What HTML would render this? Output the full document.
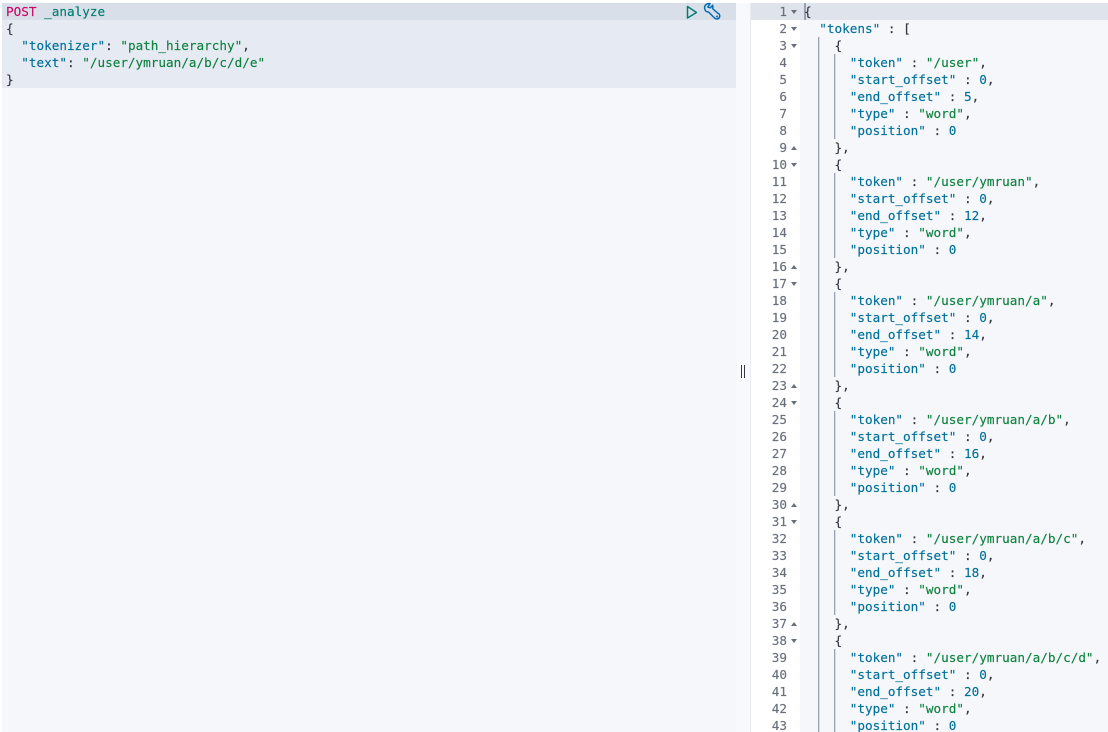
<!DOCTYPE html>
<html><head><meta charset="utf-8"><style>
html,body{margin:0;padding:0;width:1108px;height:732px;overflow:hidden;background:#fff}
.a{position:absolute}
pre{position:absolute;margin:0;font:12.67px/17px "DejaVu Sans Mono","Liberation Mono",monospace;color:#343741;-webkit-text-stroke:.15px currentColor}
.k{color:#00709a}.s{color:#0f8240}.n{color:#00709a}.m{color:#c80a68}
.d,.p{position:absolute;left:791px;width:0;height:0;border-left:3px solid transparent;border-right:3px solid transparent}
.d{border-top:4px solid #69707d}.p{border-bottom:4px solid #69707d}
.g{position:absolute;width:2px;background:linear-gradient(90deg,#98a1b6 50%,#d8dce6 50%)}
</style></head><body>
<div class="a" style="left:0;top:0;width:1108px;height:732px;overflow:hidden">
<div class="a" style="left:2px;top:3px;width:734px;height:729px;background:#f5f7fa"></div>
<div class="a" style="left:2px;top:3px;width:734px;height:85px;background:#e6eaf2"></div>
<div class="a" style="left:2px;top:3px;width:734px;height:17px;background:#d9dfe8"></div>
<div class="a" style="left:736px;top:3px;width:15px;height:729px;background:#f8f9fc"></div>
<div class="a" style="left:750px;top:3px;width:1px;height:729px;background:#e9ecf3"></div>
<div class="a" style="left:751px;top:3px;width:357px;height:729px;background:#f5f7fa"></div>
<div class="a" style="left:751px;top:3px;width:49px;height:729px;background:#fff"></div>
<div class="a" style="left:751px;top:3px;width:357px;height:17px;background:#dfe4ec"></div>
<div class="a" style="left:804px;top:3px;width:2px;height:17px;background:#98a2b3"></div>
<pre style="left:6px;top:3px"><span class="m">POST</span> <span style="color:#017d73">_analyze</span>
{
  <span class="k">"tokenizer"</span>: <span class="s">"path_hierarchy"</span>,
  <span class="k">"text"</span>: <span class="s">"/user/ymruan/a/b/c/d/e"</span>
}</pre>
<svg class="a" style="left:684px;top:2px" width="40" height="22" viewBox="0 0 40 22" fill="none">
<path d="M3.5 4.5 L12.5 10.5 L3.5 16 Z" stroke="#017d73" stroke-width="1.5" stroke-linejoin="round"/>
<path d="M26 1.6 C23 1 20.3 3.3 20.6 6.3 C20.8 8.6 22.6 10 24.6 10 L30.5 16 C32 17.6 35 17.2 35.6 15 C36.2 13 35 11.5 33.5 11 L28.5 6.5 C29 5.5 29 4.3 28.7 3.2 L26.3 5.8 L23.8 5 Z" stroke="#006bb4" stroke-width="1.5" stroke-linejoin="round"/>
<circle cx="33" cy="14.5" r="1" fill="#006bb4"/>
</svg>
<div class="a" style="left:741px;top:365px;width:1px;height:13px;background:#343741"></div>
<div class="a" style="left:744px;top:365px;width:1px;height:13px;background:#343741"></div>
<pre style="left:751px;top:3px;width:36px;text-align:right;color:#69707d">1
2
3
4
5
6
7
8
9
10
11
12
13
14
15
16
17
18
19
20
21
22
23
24
25
26
27
28
29
30
31
32
33
34
35
36
37
38
39
40
41
42
43</pre>
<i class="d" style="top:10px"></i><i class="d" style="top:27px"></i><i class="d" style="top:44px"></i>
<i class="p" style="top:146px"></i><i class="d" style="top:163px"></i>
<i class="p" style="top:265px"></i><i class="d" style="top:282px"></i>
<i class="p" style="top:384px"></i><i class="d" style="top:401px"></i>
<i class="p" style="top:503px"></i><i class="d" style="top:520px"></i>
<i class="p" style="top:622px"></i><i class="d" style="top:639px"></i>
<div class="g" style="left:818px;top:37px;height:695px"></div>
<div class="g" style="left:834px;top:54px;height:85px"></div>
<div class="g" style="left:834px;top:173px;height:85px"></div>
<div class="g" style="left:834px;top:292px;height:85px"></div>
<div class="g" style="left:834px;top:411px;height:85px"></div>
<div class="g" style="left:834px;top:530px;height:85px"></div>
<div class="g" style="left:834px;top:649px;height:83px"></div>
<pre style="left:804px;top:3px">{
  <span class="k">"tokens"</span> : [
    {
      <span class="k">"token"</span> : <span class="s">"/user"</span>,
      <span class="k">"start_offset"</span> : <span class="n">0</span>,
      <span class="k">"end_offset"</span> : <span class="n">5</span>,
      <span class="k">"type"</span> : <span class="s">"word"</span>,
      <span class="k">"position"</span> : <span class="n">0</span>
    },
    {
      <span class="k">"token"</span> : <span class="s">"/user/ymruan"</span>,
      <span class="k">"start_offset"</span> : <span class="n">0</span>,
      <span class="k">"end_offset"</span> : <span class="n">12</span>,
      <span class="k">"type"</span> : <span class="s">"word"</span>,
      <span class="k">"position"</span> : <span class="n">0</span>
    },
    {
      <span class="k">"token"</span> : <span class="s">"/user/ymruan/a"</span>,
      <span class="k">"start_offset"</span> : <span class="n">0</span>,
      <span class="k">"end_offset"</span> : <span class="n">14</span>,
      <span class="k">"type"</span> : <span class="s">"word"</span>,
      <span class="k">"position"</span> : <span class="n">0</span>
    },
    {
      <span class="k">"token"</span> : <span class="s">"/user/ymruan/a/b"</span>,
      <span class="k">"start_offset"</span> : <span class="n">0</span>,
      <span class="k">"end_offset"</span> : <span class="n">16</span>,
      <span class="k">"type"</span> : <span class="s">"word"</span>,
      <span class="k">"position"</span> : <span class="n">0</span>
    },
    {
      <span class="k">"token"</span> : <span class="s">"/user/ymruan/a/b/c"</span>,
      <span class="k">"start_offset"</span> : <span class="n">0</span>,
      <span class="k">"end_offset"</span> : <span class="n">18</span>,
      <span class="k">"type"</span> : <span class="s">"word"</span>,
      <span class="k">"position"</span> : <span class="n">0</span>
    },
    {
      <span class="k">"token"</span> : <span class="s">"/user/ymruan/a/b/c/d"</span>,
      <span class="k">"start_offset"</span> : <span class="n">0</span>,
      <span class="k">"end_offset"</span> : <span class="n">20</span>,
      <span class="k">"type"</span> : <span class="s">"word"</span>,
      <span class="k">"position"</span> : <span class="n">0</span></pre>
</div>
</body></html>
